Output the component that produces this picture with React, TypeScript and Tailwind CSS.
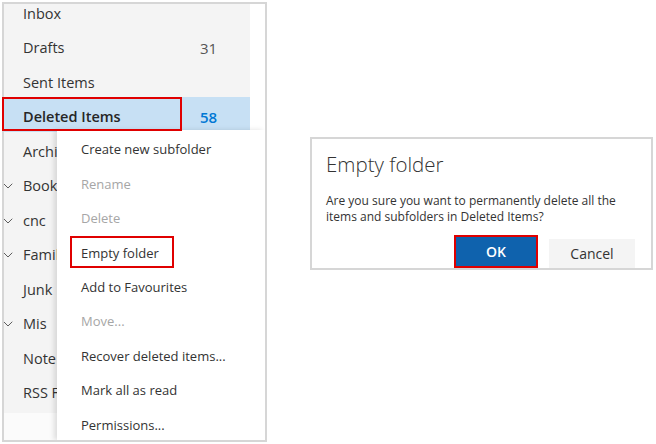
import { ChevronDown } from "lucide-react";

interface Folder {
  name: string;
  count?: string;
  chevron?: boolean;
  selected?: boolean;
}

// names below the menu are only shown as far as the menu leaves them visible
const folders: Folder[] = [
  { name: "Inbox" },
  { name: "Drafts", count: "31" },
  { name: "Sent Items" },
  { name: "Deleted Items", count: "58", selected: true },
  { name: "Archi" },
  { name: "Book", chevron: true },
  { name: "cnc", chevron: true },
  { name: "Famil", chevron: true },
  { name: "Junk" },
  { name: "Mis", chevron: true },
  { name: "Note" },
  { name: "RSS F" },
];

const menuItems = [
  { label: "Create new subfolder" },
  { label: "Rename", disabled: true },
  { label: "Delete", disabled: true },
  { label: "Empty folder" },
  { label: "Add to Favourites" },
  { label: "Move...", disabled: true },
  { label: "Recover deleted items..." },
  { label: "Mark all as read" },
  { label: "Permissions..." },
];

const App: React.FC = () => {
  return (
    <div
      className="w-[656px] h-[444px] bg-white flex items-start relative overflow-hidden text-[#333]"
      style={{ fontFamily: '"Open Sans", "Noto Sans", sans-serif' }}
    >
      {/* folder pane */}
      <div className="ml-[2px] mt-[2px] w-[265px] h-[440px] border-2 border-[#d6d6d6] flex relative overflow-hidden bg-[#fbfbfb]">
        <div className="w-[246px] flex flex-col">
          <div className="mt-[-10.5px] pb-[5px] flex flex-col bg-[#f4f4f4]">
            {folders.map((f) => (
              <div
                key={f.name}
                className={
                  "h-[34.5px] shrink-0 flex items-center pt-[6px] " +
                  (f.selected ? "bg-[#c7e0f4]" : "")
                }
              >
                <div className="w-[19px] flex items-center">
                  {f.chevron && (
                    <ChevronDown size={16} strokeWidth={1.3} className="ml-[-4px] text-[#444]" />
                  )}
                </div>
                <span
                  className={
                    "flex-1 text-[14.5px] whitespace-nowrap " +
                    (f.selected ? "font-semibold text-[#262626]" : "")
                  }
                >
                  {f.name}
                </span>
                <span
                  className={
                    "w-[50px] text-[15px] " +
                    (f.selected ? "font-semibold text-[#0078d4]" : "text-[#555]")
                  }
                >
                  {f.count}
                </span>
              </div>
            ))}
          </div>
        </div>
        <div className="flex-1 bg-white" />

        {/* context menu */}
        <div className="absolute left-[53px] top-[126px] right-0 bottom-0 bg-white shadow-[-3px_0_5px_rgba(0,0,0,0.12)] flex flex-col pt-[3px]">
          {menuItems.map((m) => (
            <div
              key={m.label}
              className={
                "h-[34.4px] shrink-0 flex items-center pl-[24px] text-[13px] whitespace-nowrap " +
                (m.disabled ? "text-[#a6a6a6]" : "text-[#333]")
              }
            >
              {m.label}
            </div>
          ))}
        </div>
      </div>

      {/* highlight boxes */}
      <div className="absolute left-[2px] top-[97px] w-[180px] h-[34px] border-2 border-[#e00000]" />
      <div className="absolute left-[70px] top-[236px] w-[104px] h-[32px] border-2 border-[#e00000]" />

      {/* dialog */}
      <div className="ml-[43px] mt-[137px] w-[343px] h-[133px] border-2 border-[#d6d6d6] bg-white flex flex-col pl-[14px] pr-[16px]">
        <div className="text-[20.5px] font-light text-[#333] mt-[11px] leading-[28px]">Empty folder</div>
        <div className="text-[12px] leading-[16px] text-[#333] mt-[15px]">
          Are you sure you want to permanently delete all the
          <br />
          items and subfolders in Deleted Items?
        </div>
        <div className="flex-1 flex items-end justify-end gap-[11px]">
          <div className="border-2 border-[#e00000] p-0">
            <button className="w-[80px] h-[29px] bg-[#0f62ad] text-white font-semibold text-[14px]">OK</button>
          </div>
          <button className="w-[86px] h-[29px] bg-[#f4f4f4] text-[#333] text-[14px]">Cancel</button>
        </div>
      </div>
    </div>
  );
};

export default App;
